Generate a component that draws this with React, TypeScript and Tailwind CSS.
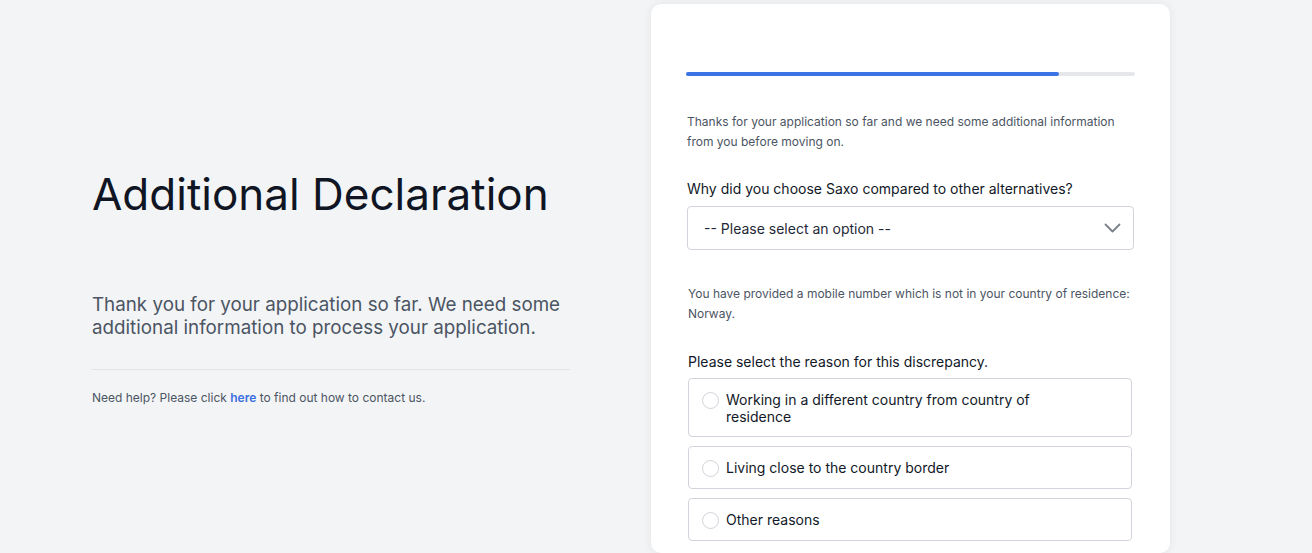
const reasons = [
  "Working in a different country from country of residence",
  "Living close to the country border",
  "Other reasons",
];

function RadioOption({ label }: { label: string }) {
  return (
    <label className="flex cursor-pointer items-start gap-[7px] rounded border border-[#d1d5db] bg-white pl-[13px] pr-[13px] pt-[12px] pb-[11px]">
      <span className="mt-[1px] h-[17px] w-[17px] shrink-0 rounded-full border border-[#cfd3d9] bg-white" />
      <span className="max-w-[320px] text-[14px] leading-[17px] text-[#111827]">{label}</span>
    </label>
  );
}

export default function App() {
  return (
    <div
      className="flex h-[553px] w-full overflow-hidden bg-[#f3f4f6] text-[#111827]"
      style={{ fontFamily: "Inter, 'Noto Sans', sans-serif" }}
    >
      <div className="w-[651px] shrink-0 pl-[92px] pr-[81px] pt-[164px]">
        <h1 className="text-[44px] font-normal leading-[60px] text-[#0f1523]">
          Additional Declaration
        </h1>
        <p className="mt-[69px] text-[18.8px] leading-[23px] text-[#4b5563]">
          Thank you for your application so far. We need some additional information to process your application.
        </p>
        <div className="mt-[30px] border-t border-[#e2e4e8]" />
        <p className="mt-[19px] text-[12px] text-[#4b5563]">
          Need help? Please click{" "}
          <a href="#" className="font-semibold text-[#3b6fe0]">
            here
          </a>{" "}
          to find out how to contact us.
        </p>
      </div>

      <div className="mt-[4px] w-[519px] shrink-0 rounded-[10px] bg-white px-[35px] pt-[68px] shadow-[0_0_10px_rgba(0,0,0,0.07)]">
        <div className="h-1 w-full rounded-full bg-[#e5e7eb]">
          <div className="h-1 w-[83%] rounded-full bg-[#3b73e6]" />
        </div>

        <p className="mt-[36px] pl-[1px] text-[12px] leading-[20px] text-[#4b5563]">
          Thanks for your application so far and we need some additional information from you before moving on.
        </p>

        <p className="mt-[27px] pl-[1px] text-[14px] leading-[20px] text-[#111827]">
          Why did you choose Saxo compared to other alternatives?
        </p>
        <div className="mt-[7px] ml-[1px] mr-[1px] flex h-[44px] items-center justify-between rounded border border-[#d1d5db] pl-4 pr-[12px]">
          <span className="text-[14px] text-[#1f2937]">-- Please select an option --</span>
          <svg width="17" height="10" viewBox="0 0 17 10" fill="none" className="mt-[-1px]">
            <path d="M1.5 1.5 8.5 8.5 15.5 1.5" stroke="#7b818b" strokeWidth="1.8" strokeLinecap="round" strokeLinejoin="round" />
          </svg>
        </div>

        <p className="mt-[34px] pl-[2px] text-[12px] leading-[20px] text-[#4b5563]">
          You have provided a mobile number which is not in your country of residence: Norway.
        </p>

        <p className="mt-[28px] pl-[2px] text-[14px] leading-[20px] text-[#111827]">
          Please select the reason for this discrepancy.
        </p>
        <div className="mt-[6px] ml-[2px] mr-[3px] flex flex-col gap-[9px]">
          {reasons.map((r) => (
            <RadioOption key={r} label={r} />
          ))}
        </div>
      </div>
    </div>
  );
}
